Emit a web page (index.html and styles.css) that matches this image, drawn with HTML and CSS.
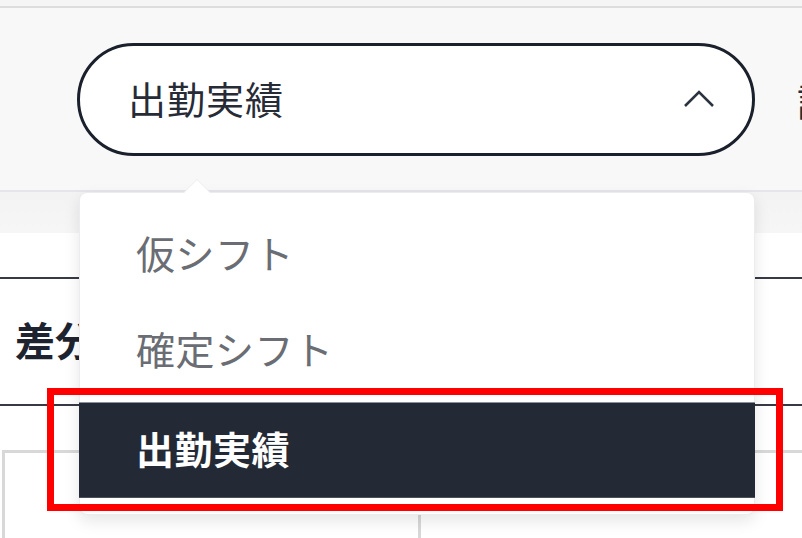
FILE: index.html
```html
<!DOCTYPE html>
<html lang="ja">
<head>
<meta charset="utf-8">
<link rel="stylesheet" href="styles.css">
</head>
<body>
<div class="topbar"></div>
<header class="header">
  <div class="select">
    <span class="select-value">出勤実績</span>
    <svg class="chevron" width="32" height="20" viewBox="0 0 32 20"><polyline points="2,17 16,3 30,17" fill="none" stroke="#2b3240" stroke-width="2.6"/></svg>
  </div>
  <span class="next">詳細</span>
</header>
<main class="content">
  <div class="band"></div>
  <div class="tabs"><span class="tab-label">差分</span></div>
  <div class="table">
    <div class="cell first"></div>
    <div class="cell"></div>
  </div>

  <div class="dropdown">
    <div class="item">仮シフト</div>
    <div class="item">確定シフト</div>
    <div class="item selected">出勤実績</div>
  </div>
  <div class="highlight"></div>
</main>
</body>
</html>
```

FILE: styles.css
```css
* { box-sizing: border-box; }
html, body { margin: 0; padding: 0; }
body {
  width: 802px;
  height: 538px;
  overflow: hidden;
  background: #ffffff;
  font-family: "Noto Sans CJK JP", "Noto Sans", sans-serif;
  color: #1f2430;
}
.topbar {
  height: 8px;
  background: #f5f5f5;
  border-bottom: 2px solid #dddddd;
}
.header {
  height: 184px;
  background: #f8f8f8;
  border-bottom: 2px solid #e6e6ea;
  display: flex;
  align-items: center;
  padding-left: 77px;
  white-space: nowrap;
  overflow: hidden;
}
.select {
  flex: none;
  width: 678px;
  height: 113px;
  border: 3.5px solid #1b212c;
  border-radius: 60px;
  background: #ffffff;
  display: flex;
  align-items: center;
  justify-content: space-between;
  padding: 0 37px 0 48px;
}
.select-value {
  font-size: 38px;
  color: #262b36;
  letter-spacing: 1px;
  padding-bottom: 4px;
}
.chevron { display: block; }
.next {
  flex: none;
  margin-left: 42px;
  font-size: 38px;
  color: #262b36;
}
.content {
  position: relative;
  height: 346px;
}
.band {
  height: 41px;
  background: linear-gradient(#f3f3f4, #f6f6f7);
}
.tabs {
  margin-top: 44px;
  height: 129px;
  border-top: 2px solid #353a44;
  border-bottom: 2px solid #353a44;
  display: flex;
  align-items: center;
  padding-left: 15px;
}
.tab-label {
  font-size: 40px;
  font-weight: 700;
  color: #1e2330;
  padding-bottom: 6px;
}
.table {
  margin-top: 44px;
  border-top: 3px solid #d8d8d8;
  display: grid;
  grid-template-columns: 416px 1fr;
  height: 100px;
  margin-left: 2px;
}
.cell { border-left: 3px solid #d8d8d8; }

.dropdown {
  position: absolute;
  left: 79px;
  top: 0;
  width: 676px;
  height: 323px;
  background: #ffffff;
  border: 1px solid #ebebf0;
  border-radius: 8px;
  box-shadow: 0 6px 16px rgba(0, 0, 0, 0.10);
  padding-top: 17px;
}
.dropdown::before {
  content: "";
  position: absolute;
  left: 104px;
  top: -13px;
  width: 0;
  height: 0;
  border-left: 13px solid transparent;
  border-right: 13px solid transparent;
  border-bottom: 13px solid #ffffff;
  filter: drop-shadow(0 -1px 0 #ececf0);
}
.item {
  height: 96px;
  display: flex;
  align-items: center;
  padding-left: 56px;
  font-size: 39px;
  color: #6a6d73;
  letter-spacing: 0.5px;
  padding-bottom: 12px;
}
.item.selected {
  background: #242a35;
  color: #ffffff;
  font-weight: 700;
  border-top: 1px solid #8a8f99;
  border-bottom: 1px solid #4a4f59;
  margin: 0 -1px;
  padding-left: 57px;
  padding-bottom: 6px;
  font-size: 38px;
}
.highlight {
  position: absolute;
  left: 47px;
  top: 196px;
  width: 736px;
  height: 123px;
  border: 7px solid #ff0000;
}
```
